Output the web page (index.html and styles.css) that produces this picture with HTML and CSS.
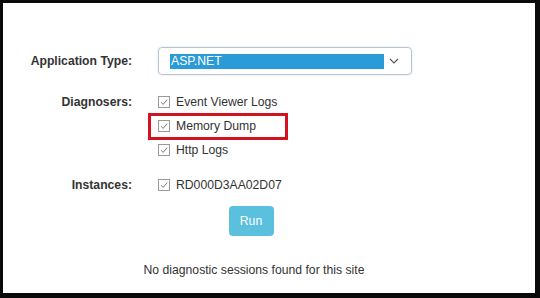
FILE: index.html
```html
<!DOCTYPE html>
<html lang="en">

<head>
    <meta charset="UTF-8">
    <title>Diagnostics</title>
    <link rel="stylesheet" href="styles.css">
</head>

<body>

    <div class="moldura">
        <form class="diag">

            <div class="linha linha-select">
                <label class="rotulo">Application Type:</label>
                <div class="select">
                    <span class="opcao">ASP.NET</span>
                    <svg class="seta" width="10" height="6" viewBox="0 0 10 6">
                        <path d="M1 1 L5 5 L9 1" fill="none" stroke="#555" stroke-width="1.1"/>
                    </svg>
                </div>
            </div>

            <div class="linha">
                <label class="rotulo">Diagnosers:</label>
                <div class="checks">
                    <div class="check"><span class="caixa"><svg width="10" height="10" viewBox="0 0 10 10"><path d="M2 5.2 L4.2 7.4 L8.2 2.6" fill="none" stroke="#777" stroke-width="1"/></svg></span>Event Viewer Logs</div>
                    <div class="check marcado"><span class="caixa"><svg width="10" height="10" viewBox="0 0 10 10"><path d="M2 5.2 L4.2 7.4 L8.2 2.6" fill="none" stroke="#777" stroke-width="1"/></svg></span>Memory Dump</div>
                    <div class="check"><span class="caixa"><svg width="10" height="10" viewBox="0 0 10 10"><path d="M2 5.2 L4.2 7.4 L8.2 2.6" fill="none" stroke="#777" stroke-width="1"/></svg></span>Http Logs</div>
                </div>
            </div>

            <div class="linha linha-inst">
                <label class="rotulo">Instances:</label>
                <div class="checks">
                    <div class="check"><span class="caixa"><svg width="10" height="10" viewBox="0 0 10 10"><path d="M2 5.2 L4.2 7.4 L8.2 2.6" fill="none" stroke="#777" stroke-width="1"/></svg></span>RD000D3AA02D07</div>
                </div>
            </div>

            <div class="acoes">
                <button type="button" class="btn-run">Run</button>
            </div>

            <p class="vazio">No diagnostic sessions found for this site</p>

        </form>
    </div>

</body>

</html>
```

FILE: styles.css
```css
html,
body {
    margin: 0;
    height: 100%;
}

body {
    font-family: "Liberation Sans", Arial, sans-serif;
    color: #333;
    background: #000;
}

.moldura {
    box-sizing: border-box;
    height: 298px;
    width: 540px;
    background: #fff;
    border-style: solid;
    border-color: #0a0a0a;
    border-width: 3px 5px 5px 3px;
}

.diag {
    padding-top: 44px;
}

.linha {
    display: grid;
    grid-template-columns: 129px 1fr;
    column-gap: 26px;
    align-items: start;
    margin-top: 15px;
}

.linha-select {
    margin-top: 0;
}

.linha-inst {
    margin-top: 11px;
}

.rotulo {
    text-align: right;
    font-weight: bold;
    font-size: 12.2px;
    line-height: 24px;
    color: #333;
}

.linha-select .rotulo {
    line-height: 28px;
}

.select {
    box-sizing: border-box;
    width: 254px;
    height: 28px;
    border: 1px solid #b7c4d2;
    border-radius: 4px;
    box-shadow: 0 0 2px rgba(120, 150, 190, 0.35);
    display: flex;
    align-items: center;
    padding: 0 12px 0 11px;
}

.opcao {
    flex: 1;
    background: #2a9bd7;
    color: #fff;
    font-size: 12.2px;
    line-height: 15px;
    padding-left: 1px;
    margin-right: 5px;
}

.seta {
    display: block;
}

.checks {
    display: flex;
    flex-direction: column;
}

.check {
    position: relative;
    display: flex;
    align-items: center;
    height: 24px;
    font-size: 12.2px;
}

.caixa {
    box-sizing: border-box;
    width: 12px;
    height: 12px;
    border: 1px solid #9a9a9a;
    margin-right: 6px;
    display: flex;
    align-items: center;
    justify-content: center;
}

.marcado::after {
    content: "";
    position: absolute;
    left: -10px;
    top: -1px;
    width: 140px;
    height: 27px;
    box-sizing: border-box;
    border: 3px solid #d3121f;
}

.acoes {
    display: flex;
    justify-content: center;
    padding-right: 36px;
    margin-top: 9px;
}

.btn-run {
    width: 45px;
    height: 30px;
    border: none;
    border-radius: 4px;
    background: #5bc0de;
    color: #fff;
    font-family: "Liberation Sans", Arial, sans-serif;
    font-size: 12.2px;
    padding: 0;
}

.vazio {
    text-align: center;
    font-size: 12.2px;
    line-height: 16px;
    margin: 26px 0 0;
    padding-right: 30px;
}
```
